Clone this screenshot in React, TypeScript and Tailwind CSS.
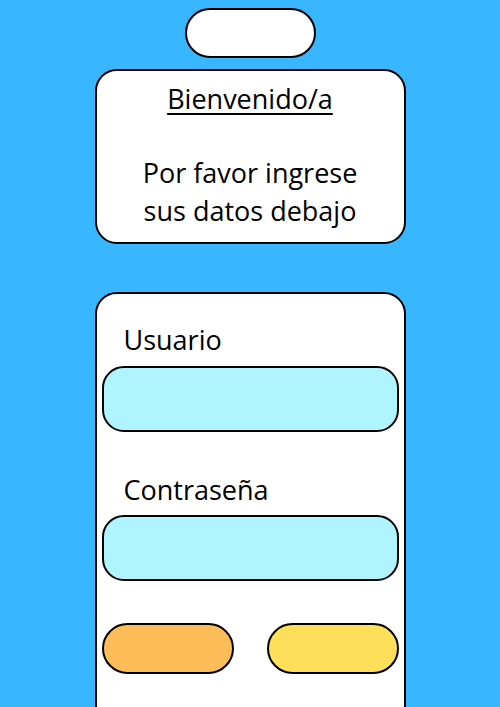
import React from "react";

const App = () => {
  return (
    <div
      className="h-[707px] w-[500px] overflow-hidden bg-[#38b6ff] flex flex-col items-center"
      style={{ fontFamily: '"Open Sans", sans-serif' }}
    >
      {/* top pill */}
      <div className="shrink-0 mt-[8px] w-[131px] h-[50px] rounded-full bg-white border-2 border-black" />

      {/* welcome card */}
      <div className="shrink-0 mt-[11px] w-[311px] h-[175px] rounded-[22px] bg-white border-2 border-black flex flex-col items-center text-black text-[27px]">
        <div className="mt-[10px] leading-[36px] underline underline-offset-[4px] decoration-[1.5px]">
          Bienvenido/a
        </div>
        <div className="mt-[37px] text-center leading-[38px]">
          Por favor ingrese
          <br />
          sus datos debajo
        </div>
      </div>

      {/* form card */}
      <div className="shrink-0 mt-[48px] w-[311px] h-[440px] rounded-[22px] bg-white border-2 border-black px-[5px] flex flex-col text-black text-[27px]">
        <div className="mt-[28px] pl-[22px] leading-[36px]">Usuario</div>
        <div className="shrink-0 mt-[8px] h-[66px] rounded-[22px] bg-[#aff4ff] border-2 border-black" />

        <div className="mt-[40px] pl-[22px] leading-[36px]">Contraseña</div>
        <div className="shrink-0 mt-[7px] h-[66px] rounded-[22px] bg-[#aff4ff] border-2 border-black" />

        <div className="shrink-0 mt-[42px] flex justify-between">
          <button className="w-[132px] h-[51px] rounded-full bg-[#ffbd59] border-2 border-black" />
          <button className="w-[132px] h-[51px] rounded-full bg-[#ffde59] border-2 border-black" />
        </div>
      </div>
    </div>
  );
};

export default App;
